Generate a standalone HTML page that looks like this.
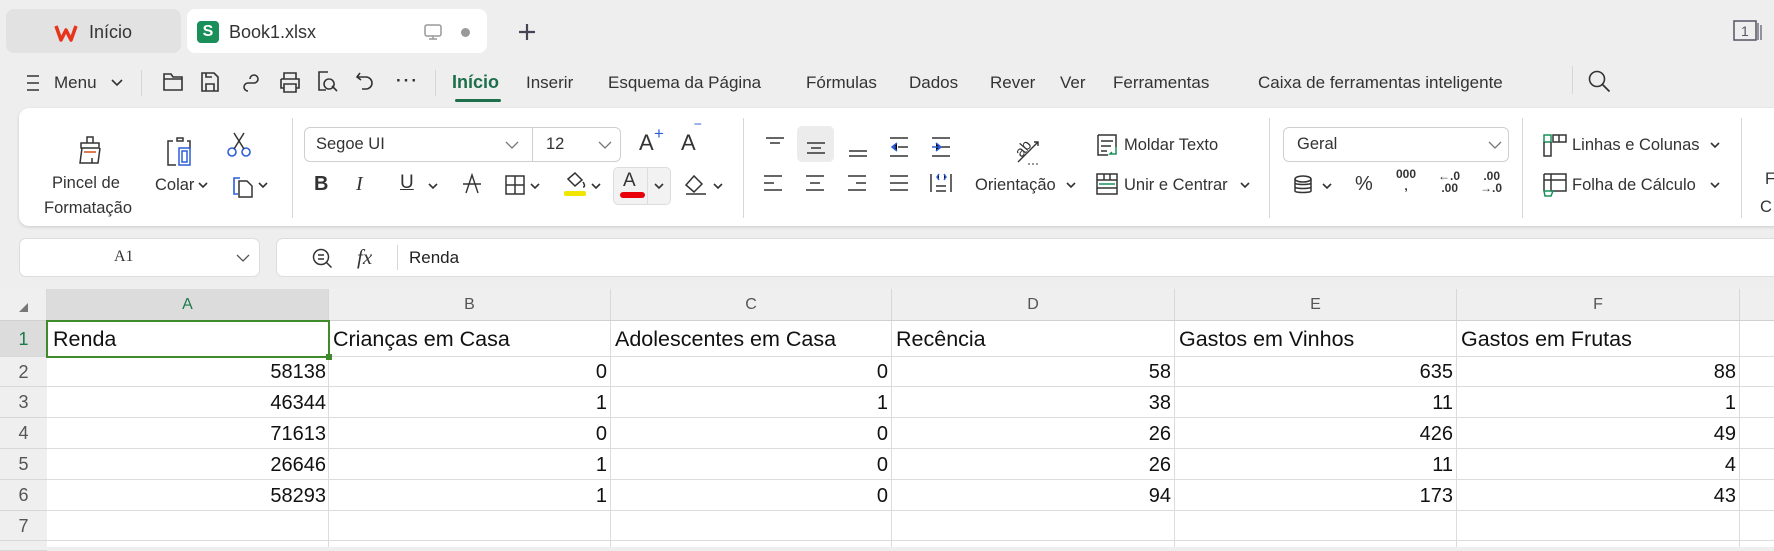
<!DOCTYPE html>
<html><head><meta charset="utf-8"><style>
*{margin:0;padding:0;box-sizing:border-box}
body{width:1774px;height:547px;overflow:hidden;background:#eeeeee;font-family:"Liberation Sans",sans-serif;color:#222;position:relative}
.a{position:absolute;white-space:nowrap}
.t{font-size:17px;color:#333}
.rb{font-size:16.5px;color:#333}
svg{position:absolute;overflow:visible}
.sep{position:absolute;width:1px;background:#d6d6d6}
.hd{position:absolute;top:289px;height:32px;background:#efefef;border-right:1px solid #d8d8d8;border-bottom:1px solid #d0d0d0;font-size:16px;color:#555;text-align:center;line-height:32px}
.rh{position:absolute;left:0;width:47px;background:#efefef;border-bottom:1px solid #d8d8d8;font-size:18px;color:#555;text-align:center}
.cell{position:absolute;font-size:20px;color:#111;line-height:30px}
.h1{font-size:21.5px}
</style></head><body>
<div class="a" style="left:6px;top:9px;width:175px;height:44px;background:#e2e2e2;border-radius:8px"></div>
<svg style="left:55px;top:24px" width="22" height="18" viewBox="0 0 22 18"><path d="M1 2 L6 16 L11 6 L16 16 L21 2" fill="none" stroke="#e8341c" stroke-width="3.5" stroke-linejoin="round"/></svg>
<div class="a t" style="left:89px;top:22px;font-size:18px">Início</div>
<div class="a" style="left:187px;top:9px;width:300px;height:44px;background:#fff;border-radius:8px"></div>
<div class="a" style="left:197px;top:21px;width:22px;height:22px;background:#1a8f5a;border-radius:4px;color:#fff;font-size:16px;font-weight:bold;text-align:center;line-height:22px">S</div>
<div class="a t" style="left:229px;top:22px;font-size:18px">Book1.xlsx</div>
<svg style="left:424px;top:24px" width="18" height="16"><rect x="1" y="1" width="16" height="11" rx="2" fill="none" stroke="#999" stroke-width="1.5"/><path d="M9 12v3M5 15h8" stroke="#999" stroke-width="1.5"/></svg>
<div class="a" style="left:461px;top:28px;width:9px;height:9px;border-radius:50%;background:#999"></div>
<svg style="left:518px;top:23px" width="18" height="18"><path d="M9 1v16M1 9h16" stroke="#445" stroke-width="2.2"/></svg>
<svg style="left:1733px;top:20px" width="30" height="22"><rect x="1" y="1" width="22" height="19" fill="none" stroke="#556" stroke-width="1.5"/><text x="8" y="16" font-size="14" fill="#556" font-family="Liberation Sans">1</text><path d="M25 3v17M28 5v15" stroke="#556" stroke-width="1.2"/></svg>
<svg style="left:26px;top:75px" width="14" height="16"><path d="M1 1h12M1 8h12M1 15h12" stroke="#333" stroke-width="1.5"/></svg>
<div class="a t" style="left:54px;top:73px">Menu</div>
<svg style="left:111px;top:79px" width="12" height="8"><path d="M1 1l5 5 5-5" fill="none" stroke="#333" stroke-width="1.6"/></svg>
<div class="sep" style="left:141px;top:70px;height:26px"></div>
<svg style="left:162px;top:72px" width="22" height="20"><path d="M2 2h7l2 3h9v13H2z M2 7h18" fill="none" stroke="#333" stroke-width="1.6"/></svg>
<svg style="left:200px;top:71px" width="20" height="22"><path d="M2 2h12l4 4v14H2z M6 20v-7h8v7 M6 2v4h6" fill="none" stroke="#333" stroke-width="1.6"/></svg>
<svg style="left:241px;top:71px" width="20" height="22"><path d="M7 20a4 4 0 0 1 0-8h6a4 4 0 0 0 0-8a4 4 0 0 0-4 4" fill="none" stroke="#333" stroke-width="1.6"/></svg>
<svg style="left:279px;top:71px" width="22" height="22"><path d="M5 8V2h12v6 M2 8h18v9h-3 M5 17H2V8 M5 13h12v8H5z" fill="none" stroke="#333" stroke-width="1.6"/></svg>
<svg style="left:317px;top:70px" width="22" height="24"><path d="M9 20H2V2h9 M12 9a5 5 0 1 0 0.1 0 M15 16l5 5" fill="none" stroke="#333" stroke-width="1.6"/></svg>
<svg style="left:356px;top:71px" width="18" height="22"><path d="M4 2L1 6l4 3 M1 6h9a6 6 0 0 1 0 12H6" fill="none" stroke="#333" stroke-width="1.6"/></svg>
<div class="a t" style="left:396px;top:71px;letter-spacing:2px;font-weight:bold">···</div>
<div class="sep" style="left:435px;top:70px;height:26px"></div>
<div class="a" style="left:452px;top:72px;font-size:18px;font-weight:bold;color:#1d6e4a">Início</div>
<div class="a" style="left:455px;top:99px;width:46px;height:3px;background:#1d6e4a;border-radius:2px"></div>
<div class="a t" style="left:526px;top:73px">Inserir</div>
<div class="a t" style="left:608px;top:73px">Esquema da Página</div>
<div class="a t" style="left:806px;top:73px">Fórmulas</div>
<div class="a t" style="left:909px;top:73px">Dados</div>
<div class="a t" style="left:990px;top:73px">Rever</div>
<div class="a t" style="left:1060px;top:73px">Ver</div>
<div class="a t" style="left:1113px;top:73px">Ferramentas</div>
<div class="a t" style="left:1258px;top:73px">Caixa de ferramentas inteligente</div>
<div class="sep" style="left:1572px;top:66px;height:28px"></div>
<svg style="left:1588px;top:70px" width="24" height="24"><circle cx="9" cy="9" r="7.5" fill="none" stroke="#333" stroke-width="1.6"/><path d="M14.5 14.5l7 7" stroke="#333" stroke-width="1.8"/></svg>
<div class="a" style="left:19px;top:108px;width:1800px;height:118px;background:#fff;border-radius:10px;box-shadow:0 1px 3px rgba(0,0,0,.15)"></div>
<svg style="left:76px;top:135px" width="30" height="30"><path d="M11 8V2h6v6 M5 8h18v5H5z M6 13l-2 15h18l2-15 M16 28v-5" fill="none" stroke="#333" stroke-width="1.5"/><path d="M8 17h12" stroke="#d0501a" stroke-width="1.5"/></svg>
<div class="a rb" style="left:52px;top:174px">Pincel de</div>
<div class="a rb" style="left:44px;top:199px">Formatação</div>
<svg style="left:165px;top:134px" width="30" height="32"><path d="M12 4h6v3h-6z M8 7H3v24h8 M22 7h3v8" fill="none" stroke="#333" stroke-width="1.5"/><rect x="14" y="14" width="11" height="17" fill="none" stroke="#2d5fd8" stroke-width="1.5"/><rect x="17" y="17" width="5" height="11" fill="none" stroke="#2d5fd8" stroke-width="1.5"/></svg>
<div class="a rb" style="left:155px;top:176px">Colar</div>
<svg style="left:198px;top:182px" width="10" height="7"><path d="M1 1l4 4 4-4" fill="none" stroke="#333" stroke-width="1.6"/></svg>
<svg style="left:227px;top:132px" width="24" height="26"><circle cx="5" cy="20" r="4" fill="none" stroke="#2d5fd8" stroke-width="1.6"/><circle cx="19" cy="20" r="4" fill="none" stroke="#2d5fd8" stroke-width="1.6"/><path d="M7 17L17 1M17 17L7 1" stroke="#333" stroke-width="1.5"/></svg>
<svg style="left:232px;top:173px" width="22" height="24"><path d="M8 5H2v16h4" fill="none" stroke="#2d5fd8" stroke-width="1.6"/><path d="M7 8h8l5 5v11H7z" fill="none" stroke="#333" stroke-width="1.5"/></svg>
<svg style="left:258px;top:182px" width="10" height="7"><path d="M1 1l4 4 4-4" fill="none" stroke="#333" stroke-width="1.6"/></svg>
<div class="sep" style="left:292px;top:118px;height:100px"></div>
<div class="a" style="left:304px;top:127px;width:317px;height:35px;border:1px solid #cfcfcf;border-radius:6px"></div>
<div class="sep" style="left:532px;top:128px;height:33px;background:#cfcfcf"></div>
<div class="a rb" style="left:316px;top:135px">Segoe UI</div>
<svg style="left:505px;top:141px" width="14" height="8"><path d="M1 1l6 6 6-6" fill="none" stroke="#777" stroke-width="1.3"/></svg>
<div class="a rb" style="left:546px;top:135px">12</div>
<svg style="left:598px;top:141px" width="14" height="8"><path d="M1 1l6 6 6-6" fill="none" stroke="#777" stroke-width="1.3"/></svg>
<div class="a" style="left:639px;top:130px;font-size:22px;color:#333">A</div>
<div class="a" style="left:654px;top:124px;font-size:17px;color:#2d5fd8">+</div>
<div class="a" style="left:681px;top:130px;font-size:22px;color:#333">A</div>
<div class="a" style="left:695px;top:122px;font-size:17px;color:#2d5fd8">‾</div>
<div class="a" style="left:314px;top:173px;font-size:20px;font-weight:bold;color:#333">B</div>
<div class="a" style="left:356px;top:173px;font-size:20px;font-style:italic;color:#333;font-family:'Liberation Serif',serif">I</div>
<div class="a" style="left:400px;top:172px;font-size:19px;color:#333;text-decoration:underline">U</div>
<svg style="left:428px;top:183px" width="10" height="7"><path d="M1 1l4 4 4-4" fill="none" stroke="#333" stroke-width="1.6"/></svg>
<svg style="left:462px;top:173px" width="20" height="22"><path d="M4 20L10 2l6 18 M1 11h18" fill="none" stroke="#333" stroke-width="1.4"/></svg>
<svg style="left:505px;top:175px" width="20" height="20"><rect x="1" y="1" width="18" height="18" fill="none" stroke="#333" stroke-width="1.5"/><path d="M10 1v18M1 10h18" stroke="#333" stroke-width="1.5"/></svg>
<svg style="left:530px;top:183px" width="10" height="7"><path d="M1 1l4 4 4-4" fill="none" stroke="#333" stroke-width="1.6"/></svg>
<svg style="left:563px;top:171px" width="24" height="26"><path d="M5 8l7-6 7 7-7 6z M20 11c2 3 2 5 0 5" fill="none" stroke="#333" stroke-width="1.5"/><rect x="1" y="20" width="22" height="5" rx="2" fill="#f2e600"/></svg>
<svg style="left:591px;top:183px" width="10" height="7"><path d="M1 1l4 4 4-4" fill="none" stroke="#333" stroke-width="1.6"/></svg>
<div class="a" style="left:613px;top:167px;width:58px;height:38px;border:1px solid #ddd;border-radius:5px;background:#f2f2f2"></div>
<div class="sep" style="left:647px;top:168px;height:36px;background:#ddd"></div>
<div class="a" style="left:623px;top:170px;font-size:19px;color:#333">A</div>
<div class="a" style="left:620px;top:192px;width:25px;height:6px;background:#e8000b;border-radius:3px"></div>
<svg style="left:654px;top:183px" width="10" height="7"><path d="M1 1l4 4 4-4" fill="none" stroke="#333" stroke-width="1.6"/></svg>
<svg style="left:683px;top:173px" width="24" height="22"><path d="M3 12l8-9 8 8-8 8z M3 21h20" fill="none" stroke="#333" stroke-width="1.5"/></svg>
<svg style="left:713px;top:183px" width="10" height="7"><path d="M1 1l4 4 4-4" fill="none" stroke="#333" stroke-width="1.6"/></svg>
<div class="sep" style="left:743px;top:118px;height:100px"></div>
<div class="a" style="left:797px;top:126px;width:37px;height:36px;background:#ececec;border-radius:5px"></div>
<svg style="left:764px;top:136px" width="200" height="60" stroke="#333" stroke-width="1.5">
<path d="M2 2h18M6 7h10"/>
<path d="M43 7h18M47 12h10M43 17h18"/>
<path d="M85 15h18M85 20h18"/>
<path d="M126 2h18M134 11h10M126 20h18" /><path d="M133 7l-5 4 5 4M128 11h4" stroke="#2d5fd8"/>
<path d="M168 2h18M176 11h10M168 20h18"/><path d="M172 7l5 4-5 4M168 11h9" stroke="#2d5fd8"/>
<path d="M0 40h18M0 47h10M0 54h18"/>
<path d="M42 40h18M46 47h10M42 54h18"/>
<path d="M84 40h18M92 47h10M84 54h18"/>
<path d="M126 40h18M126 47h18M126 54h18"/>
<path d="M167 38v18M187 38v18M172 50h10M172 55h10"/><path d="M175 38l-2 3 2 3M180 38l2 3-2 3" stroke="#2d5fd8"/>
</svg>
<svg style="left:1010px;top:132px" width="32" height="34"><text x="4" y="22" transform="rotate(-50 12 16)" font-size="15" fill="#333" font-family="Liberation Sans">ab</text><path d="M8 30L28 10M24 10h4v4" fill="none" stroke="#333" stroke-width="1.4"/><path d="M18 32h12" stroke="#333" stroke-dasharray="2 2"/></svg>
<div class="a rb" style="left:975px;top:176px">Orientação</div>
<svg style="left:1066px;top:182px" width="10" height="7"><path d="M1 1l4 4 4-4" fill="none" stroke="#333" stroke-width="1.6"/></svg>
<svg style="left:1096px;top:133px" width="22" height="24"><path d="M2 2h18v12 M2 2v20h10 M5 8h12M5 13h10M5 18h6" fill="none" stroke="#333" stroke-width="1.5"/><path d="M20 14v7h-6l2-2" fill="none" stroke="#1a8f5a" stroke-width="1.5"/></svg>
<div class="a rb" style="left:1124px;top:136px">Moldar Texto</div>
<svg style="left:1096px;top:173px" width="22" height="22"><rect x="1" y="1" width="20" height="20" fill="none" stroke="#333" stroke-width="1.5"/><path d="M1 7h20M8 1v6M14 1v6M1 15h20" stroke="#333" stroke-width="1.5"/><path d="M3 11h16" stroke="#1a8f5a" stroke-width="1.5"/></svg>
<div class="a rb" style="left:1124px;top:176px">Unir e Centrar</div>
<svg style="left:1240px;top:182px" width="10" height="7"><path d="M1 1l4 4 4-4" fill="none" stroke="#333" stroke-width="1.6"/></svg>
<div class="sep" style="left:1269px;top:118px;height:100px"></div>
<div class="a" style="left:1283px;top:127px;width:226px;height:35px;border:1px solid #cfcfcf;border-radius:6px"></div>
<div class="a rb" style="left:1297px;top:135px">Geral</div>
<svg style="left:1488px;top:141px" width="14" height="8"><path d="M1 1l6 6 6-6" fill="none" stroke="#777" stroke-width="1.3"/></svg>
<svg style="left:1293px;top:173px" width="22" height="22"><ellipse cx="10" cy="6" rx="8" ry="3" fill="none" stroke="#333" stroke-width="1.5"/><path d="M2 6v12c0 2 16 2 16 0V6M2 10c0 2 16 2 16 0M2 14c0 2 16 2 16 0" fill="none" stroke="#333" stroke-width="1.5"/></svg>
<svg style="left:1322px;top:183px" width="10" height="7"><path d="M1 1l4 4 4-4" fill="none" stroke="#333" stroke-width="1.6"/></svg>
<div class="a" style="left:1355px;top:173px;font-size:20px;color:#333">%</div>
<div class="a" style="left:1396px;top:168px;font-size:12px;color:#333;font-weight:bold;line-height:12px;text-align:center">000<br>,</div>
<div class="a" style="left:1438px;top:170px;font-size:12px;color:#333;font-weight:bold;line-height:12px">←.0<br>&nbsp;.00</div>
<div class="a" style="left:1480px;top:170px;font-size:12px;color:#333;font-weight:bold;line-height:12px">&nbsp;.00<br>→.0</div>
<div class="sep" style="left:1522px;top:118px;height:100px"></div>
<svg style="left:1543px;top:134px" width="24" height="24"><rect x="1" y="1" width="7" height="7" fill="none" stroke="#1a8f5a" stroke-width="1.5"/><path d="M1 8v14h7V8M10 1h13v7H10z M16 1v7" fill="none" stroke="#333" stroke-width="1.5"/></svg>
<div class="a rb" style="left:1572px;top:136px">Linhas e Colunas</div>
<svg style="left:1710px;top:142px" width="10" height="7"><path d="M1 1l4 4 4-4" fill="none" stroke="#333" stroke-width="1.6"/></svg>
<svg style="left:1543px;top:173px" width="24" height="24"><path d="M1 1h22v17H8 M1 1v17 M1 7h22M8 1v17" fill="none" stroke="#333" stroke-width="1.5"/><path d="M1 18h9l-2 5H2z" fill="none" stroke="#1a8f5a" stroke-width="1.5"/></svg>
<div class="a rb" style="left:1572px;top:176px">Folha de Cálculo</div>
<svg style="left:1710px;top:182px" width="10" height="7"><path d="M1 1l4 4 4-4" fill="none" stroke="#333" stroke-width="1.6"/></svg>
<div class="sep" style="left:1741px;top:118px;height:100px"></div>
<div class="a rb" style="left:1765px;top:170px">F</div>
<div class="a rb" style="left:1760px;top:198px">C</div>
<div class="a" style="left:19px;top:238px;width:241px;height:39px;background:#fff;border:1px solid #ddd;border-radius:7px"></div>
<div class="a" style="left:114px;top:248px;font-size:16px;font-family:'Liberation Serif',serif;color:#333">A1</div>
<svg style="left:236px;top:254px" width="14" height="8"><path d="M1 1l6 6 6-6" fill="none" stroke="#555" stroke-width="1.3"/></svg>
<div class="a" style="left:276px;top:238px;width:1520px;height:39px;background:#fff;border:1px solid #ddd;border-radius:7px"></div>
<svg style="left:312px;top:248px" width="22" height="22"><circle cx="9" cy="9" r="7.5" fill="none" stroke="#333" stroke-width="1.5"/><path d="M6 7h6M6 11h6M14.5 14.5l5 5" stroke="#333" stroke-width="1.5"/></svg>
<div class="a" style="left:357px;top:245px;font-size:21px;font-style:italic;font-family:'Liberation Serif',serif;color:#333">fx</div>
<div class="sep" style="left:397px;top:245px;height:25px"></div>
<div class="a" style="left:409px;top:248px;font-size:17px;color:#222">Renda</div>
<div class="a" style="left:0;top:289px;width:1774px;height:258px;background:#fff"></div>
<div class="hd" style="left:0;width:47px"></div>
<svg style="left:19px;top:303px" width="10" height="10"><path d="M9 0v9H0z" fill="#777"/></svg>
<div class="hd" style="left:47px;width:282px;background:#dcdcdc;color:#1d7a4b">A</div>
<div class="hd" style="left:329px;width:282px">B</div>
<div class="hd" style="left:611px;width:281px">C</div>
<div class="hd" style="left:892px;width:283px">D</div>
<div class="hd" style="left:1175px;width:282px">E</div>
<div class="hd" style="left:1457px;width:283px">F</div>
<div class="hd" style="left:1740px;width:40px"></div>
<div class="rh" style="top:321px;height:36px;line-height:36px;background:#dcdcdc;color:#1d7a4b">1</div>
<div class="rh" style="top:357px;height:30px;line-height:30px">2</div>
<div class="rh" style="top:387px;height:31px;line-height:31px">3</div>
<div class="rh" style="top:418px;height:31px;line-height:31px">4</div>
<div class="rh" style="top:449px;height:31px;line-height:31px">5</div>
<div class="rh" style="top:480px;height:31px;line-height:31px">6</div>
<div class="rh" style="top:511px;height:30px;line-height:30px">7</div>
<div class="rh" style="top:541px;height:10px"></div>
<svg style="left:47px;top:321px" width="1727" height="226">
<g stroke="#dcdcdc" stroke-width="1">
<path d="M0 35.5h1727M0 65.5h1727M0 96.5h1727M0 127.5h1727M0 158.5h1727M0 189.5h1727M0 219.5h1727"/>
<path d="M281.5 0v226M563.5 0v226M844.5 0v226M1127.5 0v226M1409.5 0v226M1692.5 0v226"/>
</g></svg>
<div class="a" style="left:46px;top:320px;width:284px;height:38px;border:2.5px solid #3f8a2a"></div>
<div class="a" style="left:326px;top:354px;width:6px;height:6px;background:#3f8a2a"></div>
<div class="cell h1" style="left:53px;top:324px">Renda</div>
<div class="cell h1" style="left:333px;top:324px">Crianças em Casa</div>
<div class="cell h1" style="left:615px;top:324px">Adolescentes em Casa</div>
<div class="cell h1" style="left:896px;top:324px">Recência</div>
<div class="cell h1" style="left:1179px;top:324px">Gastos em Vinhos</div>
<div class="cell h1" style="left:1461px;top:324px">Gastos em Frutas</div>
<div style="position:absolute;left:0;top:357px">
<div class="cell" style="left:47px;width:279px;text-align:right;top:0">58138</div>
<div class="cell" style="left:329px;width:278px;text-align:right;top:0">0</div>
<div class="cell" style="left:611px;width:277px;text-align:right;top:0">0</div>
<div class="cell" style="left:892px;width:279px;text-align:right;top:0">58</div>
<div class="cell" style="left:1175px;width:278px;text-align:right;top:0">635</div>
<div class="cell" style="left:1457px;width:279px;text-align:right;top:0">88</div>
<div class="cell" style="left:47px;width:279px;text-align:right;top:31px">46344</div>
<div class="cell" style="left:329px;width:278px;text-align:right;top:31px">1</div>
<div class="cell" style="left:611px;width:277px;text-align:right;top:31px">1</div>
<div class="cell" style="left:892px;width:279px;text-align:right;top:31px">38</div>
<div class="cell" style="left:1175px;width:278px;text-align:right;top:31px">11</div>
<div class="cell" style="left:1457px;width:279px;text-align:right;top:31px">1</div>
<div class="cell" style="left:47px;width:279px;text-align:right;top:62px">71613</div>
<div class="cell" style="left:329px;width:278px;text-align:right;top:62px">0</div>
<div class="cell" style="left:611px;width:277px;text-align:right;top:62px">0</div>
<div class="cell" style="left:892px;width:279px;text-align:right;top:62px">26</div>
<div class="cell" style="left:1175px;width:278px;text-align:right;top:62px">426</div>
<div class="cell" style="left:1457px;width:279px;text-align:right;top:62px">49</div>
<div class="cell" style="left:47px;width:279px;text-align:right;top:93px">26646</div>
<div class="cell" style="left:329px;width:278px;text-align:right;top:93px">1</div>
<div class="cell" style="left:611px;width:277px;text-align:right;top:93px">0</div>
<div class="cell" style="left:892px;width:279px;text-align:right;top:93px">26</div>
<div class="cell" style="left:1175px;width:278px;text-align:right;top:93px">11</div>
<div class="cell" style="left:1457px;width:279px;text-align:right;top:93px">4</div>
<div class="cell" style="left:47px;width:279px;text-align:right;top:124px">58293</div>
<div class="cell" style="left:329px;width:278px;text-align:right;top:124px">1</div>
<div class="cell" style="left:611px;width:277px;text-align:right;top:124px">0</div>
<div class="cell" style="left:892px;width:279px;text-align:right;top:124px">94</div>
<div class="cell" style="left:1175px;width:278px;text-align:right;top:124px">173</div>
<div class="cell" style="left:1457px;width:279px;text-align:right;top:124px">43</div>
</div>
</body></html>
